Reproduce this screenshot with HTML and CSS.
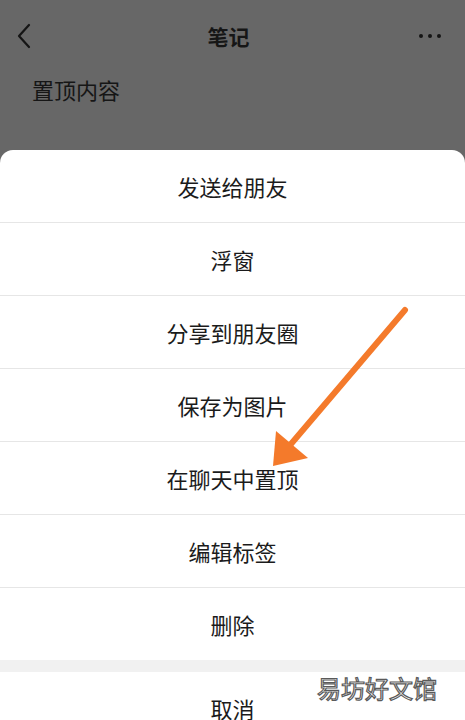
FILE: index.html
```html
<!DOCTYPE html>
<html lang="zh">
<head>
<meta charset="utf-8">
<link rel="stylesheet" href="styles.css">
</head>
<body>
<div class="screen">
  <header class="topbar">
    <svg class="back" width="20" height="26" viewBox="0 0 20 26"><path d="M13 2 L3 13 L13 24" fill="none" stroke="#151515" stroke-width="2.2" stroke-linecap="round" stroke-linejoin="round"/></svg>
    <div class="title">笔记</div>
    <div class="more"><span></span><span></span><span></span></div>
  </header>
  <div class="content">置顶内容</div>
  <div class="sheet">
    <div class="item">发送给朋友</div>
    <div class="item">浮窗</div>
    <div class="item">分享到朋友圈</div>
    <div class="item">保存为图片</div>
    <div class="item">在聊天中置顶</div>
    <div class="item">编辑标签</div>
    <div class="item">删除</div>
    <div class="gap"></div>
    <div class="item cancel">取消</div>
  </div>
  <svg class="arrow" width="465" height="720" viewBox="0 0 465 720">
    <line x1="405" y1="310" x2="291" y2="444" stroke="#f47a2b" stroke-width="6" stroke-linecap="round"/>
    <polygon points="273,466 276,431 308,458" fill="#f47a2b"/>
  </svg>
  <div class="watermark">易坊好文馆</div>
</div>
</body>
</html>
```
FILE: styles.css
```css
html, body {
  margin: 0;
  padding: 0;
}
body {
  font-family: "Noto Sans CJK SC", "Noto Sans", sans-serif;
  background: #676767;
}
.screen {
  position: relative;
  width: 465px;
  height: 720px;
  overflow: hidden;
  background: #676767;
  color: #161616;
}
.topbar {
  height: 72px;
  display: grid;
  grid-template-columns: 1fr auto 1fr;
  align-items: center;
  padding: 0 24px 0 16px;
  box-sizing: border-box;
}
.back {
  display: block;
}
.title {
  font-size: 21px;
  font-weight: 700;
}
.more {
  display: flex;
  gap: 5px;
  justify-self: end;
}
.more span {
  width: 4px;
  height: 4px;
  border-radius: 50%;
  background: #151515;
}
.content {
  padding: 0 0 0 32px;
  font-size: 22px;
  line-height: 34px;
  height: 78px;
}
.sheet {
  background: #fff;
  border-radius: 13px 13px 0 0;
  overflow: hidden;
}
.item {
  height: 72px;
  display: flex;
  align-items: center;
  justify-content: center;
  font-size: 22px;
  color: #1b1b1b;
  border-top: 1px solid #e6e6e6;
}
.item:first-child {
  border-top: none;
}
.gap {
  height: 12px;
  background: #f1f1f1;
}
.cancel {
  border-top: none;
}
.arrow {
  position: absolute;
  left: 0;
  top: 0;
}
.watermark {
  position: absolute;
  left: 317px;
  top: 670px;
  font-size: 24px;
  color: #fff;
  -webkit-text-stroke: 1.2px #5a5a5a;
}
```
